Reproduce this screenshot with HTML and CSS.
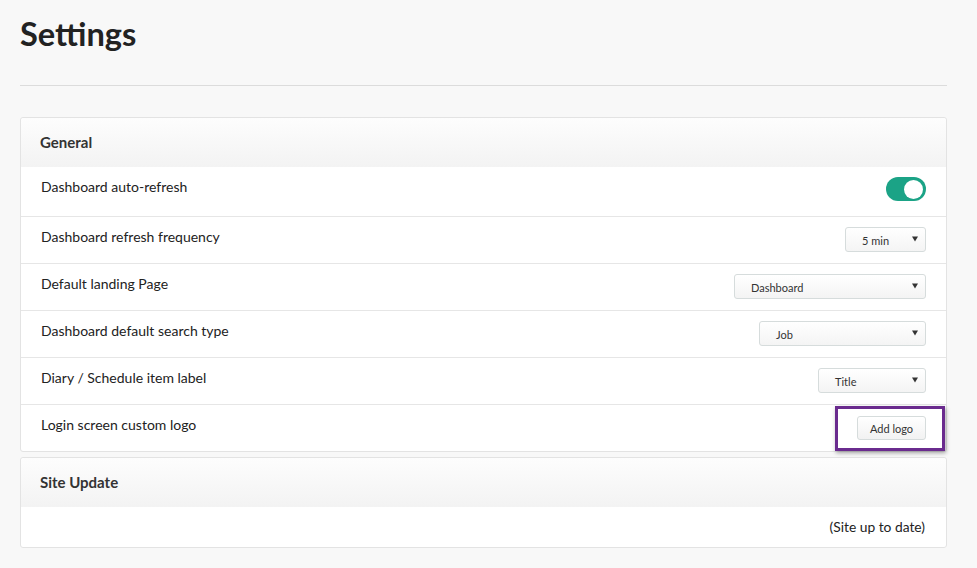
FILE: index.html
```html
<!DOCTYPE html>
<html>
<head>
<meta charset="utf-8">
<link rel="stylesheet" href="styles.css">
</head>
<body>
<div class="page">
  <h1 class="title">Settings</h1>
  <hr class="rule">
  <section class="panel">
    <div class="panel-head">General</div>
    <div class="row row-first">
      <span class="label">Dashboard auto-refresh</span>
      <span class="toggle"><span class="knob"></span></span>
    </div>
    <div class="row">
      <span class="label">Dashboard refresh frequency</span>
      <span class="select w-80"><span class="sel-text">5 min</span><svg class="caret" width="6" height="6" viewBox="0 0 6 6"><path d="M0 0.5H6L3 5.5Z" fill="#333"/></svg></span>
    </div>
    <div class="row">
      <span class="label">Default landing Page</span>
      <span class="select w-191"><span class="sel-text">Dashboard</span><svg class="caret" width="6" height="6" viewBox="0 0 6 6"><path d="M0 0.5H6L3 5.5Z" fill="#333"/></svg></span>
    </div>
    <div class="row">
      <span class="label">Dashboard default search type</span>
      <span class="select w-166"><span class="sel-text">Job</span><svg class="caret" width="6" height="6" viewBox="0 0 6 6"><path d="M0 0.5H6L3 5.5Z" fill="#333"/></svg></span>
    </div>
    <div class="row">
      <span class="label">Diary / Schedule item label</span>
      <span class="select w-107"><span class="sel-text">Title</span><svg class="caret" width="6" height="6" viewBox="0 0 6 6"><path d="M0 0.5H6L3 5.5Z" fill="#333"/></svg></span>
    </div>
    <div class="row row-last">
      <span class="label">Login screen custom logo</span>
      <span class="btn-wrap"><span class="btn">Add logo</span><span class="highlight"></span></span>
    </div>
  </section>
  <section class="panel panel-2">
    <div class="panel-head">Site Update</div>
    <div class="row row-last row-status">
      <span class="status">(Site up to date)</span>
    </div>
  </section>
</div>
</body>
</html>
```

FILE: styles.css
```css
* { box-sizing: border-box; }
html, body {
  margin: 0;
  padding: 0;
  background: #f8f8f8;
  font-family: Lato, "Open Sans", sans-serif;
  color: #222;
}
.page {
  width: 927px;
  margin-left: 20px;
  padding-top: 14px;
}
.title {
  margin: 0;
  font-size: 32.6px;
  font-weight: 700;
  line-height: 40px;
  color: #222;
}
.rule {
  margin: 31px 0 0 0;
  border: 0;
  border-top: 1px solid #dcdcdc;
  height: 0;
}
.panel {
  margin-top: 31px;
  background: #fff;
  border: 1px solid #e3e3e3;
  border-radius: 3px;
}
.panel-2 {
  margin-top: 5px;
}
.panel-head {
  height: 49px;
  padding: 14px 0 0 19px;
  font-size: 15px;
  font-weight: 700;
  line-height: 20px;
  color: #333;
  background: linear-gradient(#fdfdfd, #f3f3f3);
  border-radius: 3px 3px 0 0;
}
.row {
  height: 47px;
  padding: 10px 20px 0 20px;
  display: flex;
  justify-content: space-between;
  align-items: flex-start;
  border-bottom: 1px solid #e6e6e6;
}
.row-first { height: 50px; }
.row-last { border-bottom: 0; height: 46px; }
.row-status { height: 40px; justify-content: flex-end; padding-right: 21px; }
.label, .status {
  font-size: 14px;
  line-height: 20px;
  color: #222;
}
.status { font-size: 13.8px; }
.toggle {
  width: 40px;
  height: 24px;
  border-radius: 12px;
  background: #1ba386;
  display: flex;
  justify-content: flex-end;
  align-items: center;
  padding-right: 3px;
}
.knob {
  width: 19px;
  height: 19px;
  border-radius: 50%;
  background: #fff;
}
.select {
  height: 25px;
  border: 1px solid #d6dcdc;
  border-radius: 3px;
  background: linear-gradient(#ffffff, #f4f4f4);
  display: flex;
  align-items: center;
  justify-content: space-between;
  padding: 0 7px 0 16px;
}
.sel-text {
  font-size: 11px;
  color: #333;
  padding-top: 2px;
}
.caret { margin-top: -2px; }
.w-80 { width: 81px; }
.w-191 { width: 192px; }
.w-166 { width: 167px; }
.w-107 { width: 108px; }
.btn-wrap {
  position: relative;
  margin-top: 1px;
}
.btn {
  display: flex;
  align-items: center;
  justify-content: center;
  width: 69px;
  height: 24px;
  border: 1px solid #d6dcdc;
  border-radius: 3px;
  background: linear-gradient(#ffffff, #f2f2f2);
  font-size: 11px;
  color: #333;
}
.highlight {
  position: absolute;
  left: -22px;
  top: -10px;
  width: 110px;
  height: 45px;
  border: 3px solid #6a2b8e;
  box-shadow: 1px 2px 4px rgba(0,0,0,0.35);
  pointer-events: none;
}
```
